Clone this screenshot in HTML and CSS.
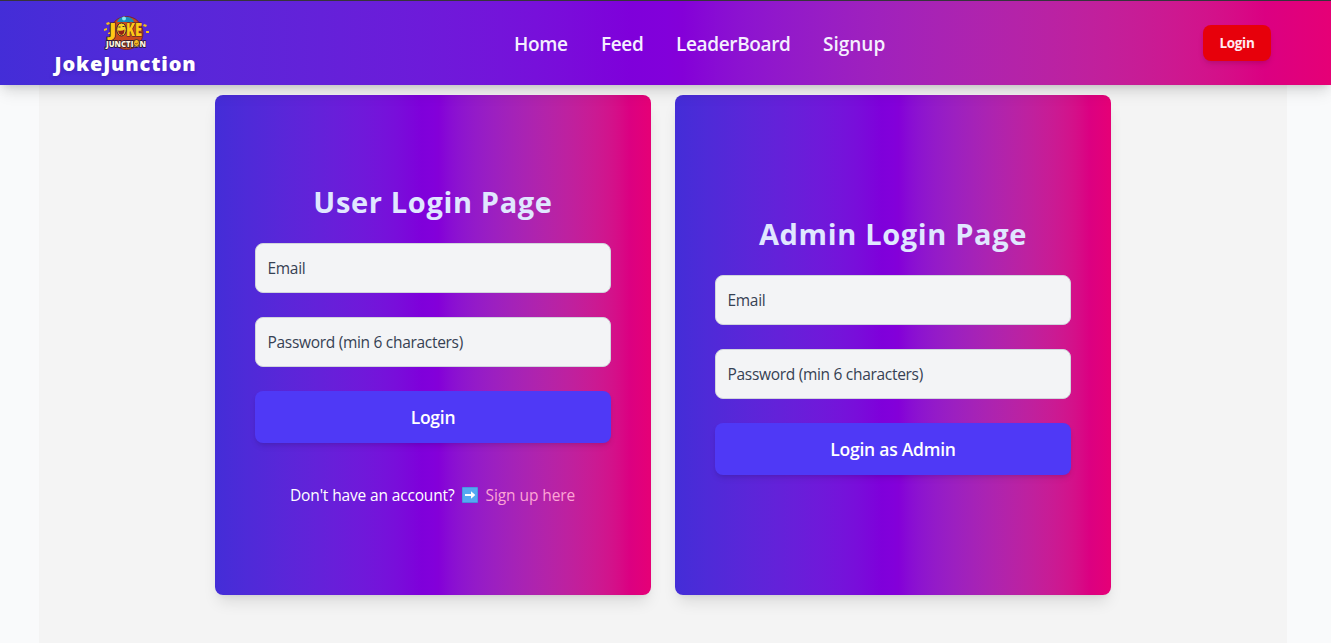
FILE: index.html
```html
<!DOCTYPE html>
<html lang="en">
<head>
<meta charset="utf-8">
<title>JokeJunction</title>
<link rel="stylesheet" href="styles.css">
</head>
<body>
<header class="navbar">
  <a class="brand">
    <svg class="brand-logo" viewBox="0 0 48 36" aria-hidden="true">
      <circle cx="23.500" cy="18" r="16.500" fill="#c94a1c" stroke="#6b2540" stroke-width="1"/>
      <path d="M14 7q2-5 7-5l4 0q5 1 6 5z" fill="#168bc0"/>
      <circle cx="21" cy="3.500" r="2" fill="#8ae4f4"/>
      <g fill="#f0c11d"><path d="M3 8l3-1 1 2-3 1zM1 14l3-1 0 2-3 1zM5 18l2-1 0 2-2 0zM41 9l3 1-1 2-3-1zM43 16l3 0 0 2-3 0z"/></g>
      <g class="logo-joke"><text x="6" y="20.500" textLength="7.500" lengthAdjust="spacingAndGlyphs">J</text><text x="23" y="20.500" textLength="16" lengthAdjust="spacingAndGlyphs">KE</text></g>
      <ellipse cx="18.500" cy="14.500" rx="4.800" ry="6.500" fill="#f8d524" stroke="#3a2030" stroke-width="1"/>
      <path d="M15 15.500q4 1 6.500-1q0 5-3 5.500q-3-.5-3.500-4.500z" fill="#912018"/>
      <path d="M15.500 12h2M19.500 11.500h2" stroke="#3a2030" stroke-width="1.200"/>
      <text class="logo-junction" x="3" y="31.500" textLength="40" lengthAdjust="spacingAndGlyphs">JUNCTION</text>
      <ellipse cx="33.500" cy="28" rx="3" ry="3.500" fill="#f2bd20" stroke="#2a1a2a" stroke-width=".8"/>
      <path d="M32 28.500q2 1.500 3-1" stroke="#8b3015" stroke-width=".8" fill="none"/>
    </svg>
    <span class="brand-name">JokeJunction</span>
  </a>
  <nav class="nav-links">
    <a class="nav-home">Home</a><a class="nav-feed">Feed</a><a class="nav-board">LeaderBoard</a><a class="nav-signup">Signup</a>
  </nav>
  <button class="nav-login">Login</button>
</header>
<main class="page">
  <section class="card">
    <h1 class="card-title">User Login Page</h1>
    <input class="field" type="email" placeholder="Email">
    <input class="field" type="password" placeholder="Password (min 6 characters)">
    <button class="submit">Login</button>
    <p class="hint"><span class="hint-text">Don't have an account?</span>
      <svg class="hint-arrow" viewBox="0 0 16 16" aria-hidden="true"><rect width="16" height="16" rx=".8" fill="#4590dc"/><rect x=".7" y=".7" width="14.600" height="14.300" fill="#55a8f2"/><path d="M3 7h6V4.300L13.300 8 9 11.700V9H3z" fill="#fff"/></svg>
      <a class="hint-link">Sign up here</a></p>
  </section>
  <section class="card">
    <h1 class="card-title">Admin Login Page</h1>
    <input class="field" type="email" placeholder="Email">
    <input class="field" type="password" placeholder="Password (min 6 characters)">
    <button class="submit">Login as Admin</button>
  </section>
</main>
</body>
</html>
```
FILE: styles.css
```css
* { box-sizing: border-box; }
body {
  margin: 0;
  height: 643px;
  overflow: hidden;
  background: #f9fafb;
  font-family: "Segoe UI", "Open Sans", "Noto Sans", sans-serif;
}
.navbar, .card {
  background: linear-gradient(to right in oklab, oklch(0.457 0.24 277.023), oklch(0.496 0.265 301.924), oklch(0.592 0.249 0.584));
}
.navbar {
  position: relative;
  z-index: 1;
  height: 85px;
  padding: 0 60px 0 54px;
  border-top: 1px solid #36343b;
  display: grid;
  grid-template-columns: 143px 1fr 68px;
  align-items: center;
  box-shadow: 0 10px 15px -3px #0000001a, 0 4px 6px -4px #0000001a, 0 2px 12px #00000014;
}
.brand { display: flex; flex-direction: column; align-items: center; padding-top: 5px; }
.brand-logo { width: 48px; height: 36px; margin-left: 2px; overflow: visible; }
.logo-joke { font: 800 18px "Open Sans"; fill: #ffc915; stroke: #3a2030; stroke-width: 1.2px; paint-order: stroke; }
.logo-junction { font: 800 9.5px "Open Sans"; fill: #fff4dc; stroke: #211631; stroke-width: 1.6px; paint-order: stroke; }
.brand-name {
  height: 26px;
  font-size: 20px;
  line-height: 26px;
  font-weight: 800;
  letter-spacing: 0.85px;
  color: #fff;
  white-space: nowrap;
  text-shadow: 0 2px 4px #00000026;
}
.nav-links { display: flex; gap: 32px; padding: 1px 0 0 317px; }
.nav-links a { color: #f5efff; font-size: 19px; font-weight: 650; line-height: 28px; white-space: nowrap; letter-spacing: -0.35px; }
.nav-home { width: 55px; }
.nav-feed { width: 43px; }
.nav-board { width: 115px; }
.nav-links .nav-signup { width: 64px; letter-spacing: 0; }
.nav-login {
  height: 36px;
  padding: 0;
  border: 0;
  border-radius: 8px;
  background: #e7000b;
  color: #ffeaf0;
  font: 700 13.5px "Segoe UI", "Open Sans", sans-serif;
  letter-spacing: -0.35px;
  box-shadow: 0 4px 6px -1px #0000001a, 0 2px 4px -2px #0000001a;
}
.page {
  width: 1248px;
  height: 558px;
  margin-left: 39px;
  padding: 10px 176px;
  display: flex;
  align-items: flex-start;
  gap: 24px;
  background: #f4f4f4;
}
.card {
  width: 436px;
  height: 500px;
  padding: 0 40px;
  border-radius: 8px;
  display: flex;
  flex-direction: column;
  justify-content: center;
  box-shadow: 0 10px 15px -3px #0000001a, 0 4px 6px -4px #0000001a;
}
.card-title {
  height: 36px;
  margin: 0 0 24px;
  text-align: center;
  color: #e0e7ff;
  font-size: 29px;
  line-height: 38px;
  font-weight: 700;
  letter-spacing: 0.65px;
  white-space: nowrap;
}
.field {
  width: 100%;
  height: 50px;
  margin: 0 0 24px;
  padding: 0 11.5px;
  border: 1px solid #d1d5dc;
  border-radius: 8px;
  background: #f3f4f6;
  font: 15.5px "Segoe UI", "Open Sans", sans-serif;
  letter-spacing: -0.3px;
}
.field::placeholder { color: #364153; opacity: 1; }
.submit {
  height: 52px;
  flex: none;
  border: 0;
  border-radius: 8px;
  background: #4f39f6;
  color: #fff;
  font: 650 17.5px "Segoe UI", "Open Sans", sans-serif;
  letter-spacing: -0.25px;
  box-shadow: 0 4px 6px -1px #0000001a, 0 2px 4px -2px #0000001a;
}
.hint {
  height: 24px;
  margin: 40px 0 0;
  display: flex;
  align-items: center;
  color: #fff;
  font-size: 15.5px;
  line-height: 24px;
  white-space: nowrap;
  padding-left: 35px;
}
.hint-text { width: 165px; letter-spacing: -0.15px; }
.hint-arrow { width: 16px; height: 16px; margin: 0 7.5px 0 7px; }
.hint-link { color: #fda5d5; letter-spacing: -0.08px; }
```
